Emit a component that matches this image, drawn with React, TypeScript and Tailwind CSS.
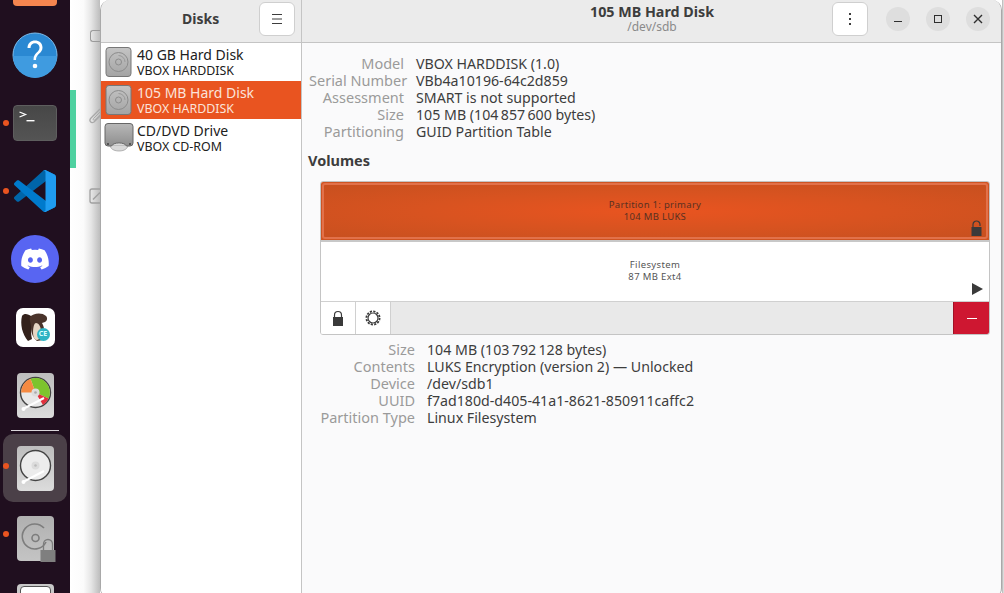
import React from "react";
import { FaDiscord } from "react-icons/fa";

function DiskIcon() {
  return (
    <svg width="28" height="30" viewBox="0 0 28 30" className="shrink-0">
      <defs>
        <linearGradient id="dk" x1="0" y1="0" x2="0" y2="1">
          <stop offset="0" stopColor="#c4c4c4" />
          <stop offset="1" stopColor="#a4a4a4" />
        </linearGradient>
      </defs>
      <rect x="1" y="0.5" width="25" height="29" rx="3" fill="url(#dk)" stroke="#777" />
      <circle cx="13.5" cy="15" r="9.5" fill="none" stroke="#8c8c8c" strokeWidth="1" />
      <circle cx="13.5" cy="15" r="3" fill="none" stroke="#8c8c8c" strokeWidth="1" />
      <path d="M13.5 8.5a6.5 6.5 0 0 1 6.5 6.5" fill="none" stroke="#999" strokeWidth="1" />
    </svg>
  );
}

function DriveIcon() {
  return (
    <svg width="30" height="30" viewBox="0 0 30 30" className="shrink-0">
      <defs>
        <linearGradient id="dr" x1="0" y1="0" x2="0" y2="1">
          <stop offset="0" stopColor="#b8b8b8" />
          <stop offset="1" stopColor="#8e8e8e" />
        </linearGradient>
      </defs>
      <path d="M15 28c-6 0-9-3-9-6h18c0 3-3 6-9 6z" fill="#d9d9d9" stroke="#888" strokeWidth="0.6" />
      <path d="M4 .5h22a3 3 0 0 1 3 3V20a3 3 0 0 1-3 3h-3.500c-1-2-3.500-3-7.500-3s-6.500 1-7.500 3H4a3 3 0 0 1-3-3V3.500a3 3 0 0 1 3-3z" fill="url(#dr)" stroke="#666" />
      <rect x="3" y="20" width="2" height="2" fill="#555" />
      <rect x="25" y="20" width="2" height="2" fill="#555" />
    </svg>
  );
}

function SidebarRow({ title, sub, active, icon }: { title: string; sub: string; active?: boolean; icon: React.ReactNode }) {
  return (
    <div className={`flex h-[38px] items-center gap-[4px] pl-[3px] ${active ? "bg-[#e95420] text-[#fbe3da]" : "text-[#202020]"}`}>
      <div className="flex w-[29px] justify-center">{icon}</div>
      <div className="flex flex-col pb-[1px]">
        <span className="text-[14px] leading-[17px] whitespace-nowrap">{title}</span>
        <span className="text-[12.400px] leading-[15px] whitespace-nowrap">{sub}</span>
      </div>
    </div>
  );
}

function Props({ rows, leading }: { rows: [string, string][]; leading: string }) {
  return (
    <div className={`grid grid-cols-[95px_1fr] gap-x-[12px] ${leading}`}>
      {rows.map(([k, v]) => (
        <React.Fragment key={k}>
          <span className="text-right text-[14.500px] text-[#9a9a9a] whitespace-nowrap">{k}</span>
          <span className="text-[14.200px] text-[#3d3d3d] whitespace-nowrap">{v}</span>
        </React.Fragment>
      ))}
    </div>
  );
}

function WinBtn({ children }: { children: React.ReactNode }) {
  return <div className="flex h-[24px] w-[24px] items-center justify-center rounded-full bg-[#dedede]">{children}</div>;
}

function DockDot({ y }: { y: string }) {
  return <span className={`absolute left-[3px] h-[6px] w-[6px] rounded-full bg-[#e95420] ${y}`} />;
}

function HelpIcon() {
  return (
    <svg width="46" height="46" viewBox="0 0 46 46">
      <circle cx="23" cy="23" r="22" fill="#2a88d2" stroke="#7cbcec" strokeWidth="1" />
      <path d="M1 24h44a22 22 0 0 1-44 0z" fill="#3f9be0" />
      <path d="M15.500 16c0-5 3.500-7.500 7.500-7.500s7.500 2.500 7.500 7c0 6-6.500 6-6.500 12.500h-2.500c0-7.500 6-7.500 6-12.500 0-2.500-2-4.300-4.500-4.300s-4.500 1.800-4.500 4.800z" fill="#fff" />
      <circle cx="23" cy="34" r="2.300" fill="#fff" />
    </svg>
  );
}

function TerminalIcon() {
  return (
    <div className="flex h-[36px] w-[44px] items-start rounded-[4px] border border-[#5e5e5e] bg-[linear-gradient(#474747,#545454)] pl-[5px] pt-[2px]">
      <svg width="18" height="16" viewBox="0 0 18 16">
        <path d="M0.500 4l6 2.500-6 2.500" fill="none" stroke="#fff" strokeWidth="1.300" />
        <rect x="7.500" y="12" width="8" height="1.400" fill="#fff" />
      </svg>
    </div>
  );
}

function VSCodeIcon() {
  return (
    <svg width="42" height="42" viewBox="0 0 100 100">
      <path d="M96.4614 10.7962L75.8569 0.875542C73.4719 -0.272773 70.6217 0.211611 68.75 2.08333L1.29858 63.5832C-0.515693 65.2373 -0.513607 68.0937 1.30308 69.7452L6.81272 74.754C8.29793 76.1042 10.5347 76.2036 12.1338 74.9905L93.3609 13.3699C96.086 11.3026 100 13.2462 100 16.6667V16.4275C100 14.0265 98.6246 11.8378 96.4614 10.7962Z" fill="#0065A9" />
      <path d="M96.4614 89.2038L75.8569 99.1245C73.4719 100.273 70.6217 99.7884 68.75 97.9167L1.29858 36.4169C-0.515693 34.7627 -0.513607 31.9063 1.30308 30.2548L6.81272 25.246C8.29793 23.8958 10.5347 23.7964 12.1338 25.0095L93.3609 86.6301C96.086 88.6974 100 86.7538 100 83.3334V83.5726C100 85.9735 98.6246 88.1622 96.4614 89.2038Z" fill="#007ACC" />
      <path d="M75.8578 99.1263C73.4721 100.274 70.6219 99.7885 68.75 97.9166C71.0564 100.223 75 98.5895 75 95.3278V4.67213C75 1.41039 71.0564 -0.223106 68.75 2.08329C70.6219 0.211402 73.4721 -0.273666 75.8578 0.873633L96.4587 10.7807C98.6234 11.8217 100 14.0112 100 16.4132V83.5871C100 85.9891 98.6234 88.1786 96.4586 89.2196L75.8578 99.1263Z" fill="#1F9CF0" />
    </svg>
  );
}

function BeaverIcon() {
  return (
    <div className="relative flex h-[39px] w-[39px] rounded-[7px] bg-white">
      <svg width="39" height="39" viewBox="0 0 39 39">
        <path d="M6 8c-2 8 0 18 6 25l4-2c-2-8 0-15 2-20-3-4-9-7-12-3z" fill="#33211b" />
        <path d="M14 9c3-4 12-5 16-1 2 2 1 5-1 6l-3 1c3 5 3 12 1 17l-6 1c-4-3-6-8-6-14 0-4-2-7-1-10z" fill="#4a342b" />
        <path d="M20 15c3 0 5 4 5 9s-2 8-4 8c-3 0-4-4-4-8s1-9 3-9z" fill="#e6d6c4" />
      </svg>
      <span className="absolute bottom-[6px] right-[5px] flex h-[13px] w-[13px] items-center justify-center rounded-full bg-[#2db4c4] text-[7px] font-bold text-[#dff]">CE</span>
    </div>
  );
}

function DiskBase({ children, bg = "bg-[linear-gradient(#bdbdbd,#dcdcdc)]" }: { children: React.ReactNode; bg?: string }) {
  return <div className={`flex h-[45px] w-[37px] items-center justify-center overflow-hidden rounded-[4px] ${bg}`}>{children}</div>;
}

function UsageIcon() {
  return (
    <DiskBase>
      <svg width="37" height="45" viewBox="0 0 37 45">
        <circle cx="18.500" cy="19.500" r="15" fill="#e8e8e8" stroke="#444" strokeWidth="1.400" />
        <path d="M18.500 19.500L13.500 5.800A14.500 14.500 0 0 1 31.600 25.600z" fill="#7dc42d" />
        <path d="M18.500 19.500L4 19.500A14.500 14.500 0 0 1 13.500 5.800z" fill="#f58a42" />
        <path d="M18.500 19.500L31.600 25.600A14.500 14.500 0 0 1 26 32z" fill="#e0303c" />
        <circle cx="18.500" cy="19.500" r="4" fill="#ddd" />
        <circle cx="18.500" cy="19.500" r="1.300" fill="#aaa" />
        <path d="M6 36l21-11" stroke="#fff" strokeWidth="2" />
        <circle cx="6.500" cy="36" r="2" fill="#fff" />
      </svg>
    </DiskBase>
  );
}

function DisksIcon() {
  return (
    <DiskBase>
      <svg width="37" height="45" viewBox="0 0 37 45">
        <circle cx="18.500" cy="19.500" r="15" fill="#ececec" stroke="#444" strokeWidth="1.400" />
        <circle cx="18.500" cy="19.500" r="4" fill="#dcdcdc" />
        <circle cx="18.500" cy="19.500" r="1.300" fill="#bbb" />
        <path d="M6 36l21-11" stroke="#fff" strokeWidth="2" />
        <circle cx="6.500" cy="36" r="2" fill="#fff" />
      </svg>
    </DiskBase>
  );
}

function LockedDiscIcon() {
  return (
    <div className="relative">
      <DiskBase bg="bg-[linear-gradient(#b0b0b0,#c4c4c4)]">
        <svg width="37" height="45" viewBox="0 0 37 45">
          <path d="M27 12a12.500 12.500 0 1 0 2 14" fill="none" stroke="#7d7d7d" strokeWidth="1.600" />
          <circle cx="18.500" cy="22" r="3.500" fill="none" stroke="#7d7d7d" strokeWidth="1.600" />
        </svg>
      </DiskBase>
      <svg width="16" height="24" viewBox="0 0 16 24" className="absolute bottom-[-1px] right-[-2px]">
        <path d="M3.500 13V6a4.500 4.500 0 0 1 9 0v7" fill="none" stroke="#7d7d7d" strokeWidth="1.300" />
        <rect x="0.500" y="12" width="15" height="12" fill="#7f7f7f" />
      </svg>
    </div>
  );
}

function DriveDockIcon() {
  return (
    <div className="h-[45px] w-[37px] rounded-[4px] bg-[#c8c8c8] px-[3px] pt-[2px]">
      <div className="h-[9px] rounded-t-[4px] border border-[#555] bg-white" />
    </div>
  );
}

function Slot({ children, className = "" }: { children: React.ReactNode; className?: string }) {
  return <div className={`flex h-[68px] shrink-0 items-center justify-center ${className}`}>{children}</div>;
}

function Dock() {
  return (
    <div className="relative flex w-[70px] shrink-0 flex-col bg-[#200f1f]">
      <Slot className="-mt-[47px]">
        <div className="h-[37px] w-[44px] rounded-b-[4px] bg-[#f5854f]" />
      </Slot>
      <Slot><HelpIcon /></Slot>
      <Slot><TerminalIcon /></Slot>
      <Slot><VSCodeIcon /></Slot>
      <Slot><div className="flex h-[48px] w-[48px] items-center justify-center rounded-full bg-[#5865f2] text-white"><FaDiscord size={30} /></div></Slot>
      <Slot><BeaverIcon /></Slot>
      <Slot><UsageIcon /></Slot>
      <div className="mx-[11px] mt-[1px] h-px shrink-0 bg-[#d8d4d8]" />
      <Slot className="mx-[3px] mt-[3px] h-[64px] rounded-[10px] bg-[#4b4048]"><DisksIcon /></Slot>
      <Slot className="mt-[2px]"><LockedDiscIcon /></Slot>
      <Slot><DriveDockIcon /></Slot>
      <DockDot y="top-[120px]" />
      <DockDot y="top-[188px]" />
      <DockDot y="top-[463px]" />
      <DockDot y="top-[531px]" />
    </div>
  );
}

function BackStrip() {
  return (
    <div className="flex w-[30px] shrink-0 flex-col bg-[linear-gradient(90deg,#fff_0%,#fbfbfb_45%,#e6e6e6_70%,#bdbdbd_100%)]">
      <div className="flex h-[90px] items-start justify-end pt-[30px]">
        <div className="h-[12px] w-[10px] rounded-l-[3px] border border-r-0 border-[#9a9a9a]" />
      </div>
      <div className="flex h-[78px] items-start justify-between pt-[17px]">
        <div className="-mt-[17px] h-[78px] w-[6px] bg-[#4fd1a0]" />
        <svg width="12" height="18" viewBox="0 0 12 18">
          <path d="M12 2L3 11c-2.500 2.500 0 6 3 4l6-6" fill="none" stroke="#a8a8a8" strokeWidth="1.300" />
          <path d="M12 5L5.500 11.500c-1 1 .5 2.300 1.500 1.300L12 8" fill="none" stroke="#a8a8a8" strokeWidth="1" />
        </svg>
      </div>
      <div className="flex items-start justify-end pt-[20px]">
        <svg width="11" height="16" viewBox="0 0 11 16">
          <path d="M11 1H3a2 2 0 0 0-2 2v10a2 2 0 0 0 2 2h8" fill="none" stroke="#a0a0a0" strokeWidth="1.300" />
          <path d="M4 11.500l7-7" stroke="#a0a0a0" strokeWidth="1.500" />
        </svg>
      </div>
    </div>
  );
}

function SmallLock({ open }: { open?: boolean }) {
  return (
    <svg width="12" height="16" viewBox="0 0 12 16">
      <path d={open ? "M2 9V4.500a3.500 3.500 0 0 1 7 0V6" : "M2.500 8V5a3.500 3.500 0 0 1 7 0v3"} fill="none" stroke="#3a3a3a" strokeWidth="1.200" />
      <rect x={open ? "0.500" : "1"} y="7" width="10" height="9" fill="#3a3a3a" />
    </svg>
  );
}

function Volume() {
  return (
    <div className="ml-[18px] mr-[11px] mt-[12px] overflow-hidden rounded-[3px] border border-[#c4c4c4] bg-white">
      <div className="flex h-[60px] border-b-2 border-[#c8c8c8] bg-[#cf5422] p-[1px]">
        <div className="relative flex flex-1 flex-col items-center justify-center rounded-[3px] border-2 border-[#e2714a] bg-[radial-gradient(ellipse_at_center,#e95420_0%,#d85320_50%,#c8501f_100%)] pb-[1px] text-[9.500px] leading-[12px] tracking-[0.3px] text-[#5a3020]">
          <span>Partition 1: primary</span>
          <span>104 MB LUKS</span>
          <span className="absolute bottom-[1px] right-[3px] flex"><SmallLock open /></span>
        </div>
      </div>
      <div className="relative flex h-[60px] flex-col items-center justify-center border-b border-[#d0d0d0] pb-[2px] text-[9.500px] leading-[12px] tracking-[0.35px] text-[#555]">
        <span>Filesystem</span>
        <span>87 MB Ext4</span>
        <svg width="11" height="12" viewBox="0 0 11 12" className="absolute bottom-[6px] right-[6px]">
          <path d="M0 0l11 6-11 6z" fill="#3a3a3a" />
        </svg>
      </div>
      <div className="flex h-[32px] bg-[#e9e9e9]">
        <div className="flex w-[35px] items-center justify-center border-r border-[#d0d0d0] bg-white"><SmallLock /></div>
        <div className="flex w-[35px] items-center justify-center border-r border-[#d0d0d0] bg-white">
          <svg width="16" height="16" viewBox="0 0 16 16">
            <circle cx="8" cy="8" r="5" fill="none" stroke="#3a3a3a" strokeWidth="1.200" />
            <circle cx="8" cy="8" r="6.600" fill="none" stroke="#3a3a3a" strokeWidth="1.800" strokeDasharray="2.200 1.260" />
          </svg>
        </div>
        <div className="flex-1" />
        <div className="flex w-[36px] items-center justify-center border-l border-[#a01226] bg-[#ce1731]">
          <div className="h-px w-[10px] bg-white" />
        </div>
      </div>
    </div>
  );
}

export default function App() {
  return (
    <div className="flex h-[593px] w-[1004px] overflow-hidden bg-white [font-family:'Noto_Sans',sans-serif]">
      <Dock />
      <BackStrip />
      <div className="flex h-[598px] w-[902px] shrink-0 flex-col overflow-hidden rounded-[10px] border-x border-[#a9a9a9] bg-[#fafafb]">
        <div className="flex h-[43px] shrink-0 border-b border-[#c4c4c4] bg-[#ebebeb]">
          <div className="flex w-[201px] shrink-0 items-center justify-between border-r border-[#c4c4c4] pb-[5px] pl-[81px] pr-[6px]">
            <span className="text-[14px] font-bold text-[#3d3d3d]">Disks</span>
            <div className="flex h-[34px] w-[36px] items-center justify-center rounded-[6px] border border-[#cfcfcf] bg-white">
              <svg width="12" height="10" viewBox="0 0 12 10"><path d="M1 .5h10M1 5h10M1 9.500h10" stroke="#3d3d3d" strokeWidth="1" /></svg>
            </div>
          </div>
          <div className="flex flex-1 items-center pb-[5px] pl-[290px] pr-[11px]">
            <div className="flex w-[120px] flex-col items-center -mt-[1px]">
              <span className="whitespace-nowrap text-[14.300px] font-bold leading-[17px] text-[#3d3d3d]">105 MB Hard Disk</span>
              <span className="whitespace-nowrap text-[12px] leading-[14px] text-[#8a8a8a]">/dev/sdb</span>
            </div>
            <div className="ml-[120px] flex h-[34px] w-[36px] items-center justify-center rounded-[6px] border border-[#cfcfcf] bg-white">
              <svg width="4" height="12" viewBox="0 0 4 12"><path d="M2 0v2M2 5v2M2 10v2" stroke="#3d3d3d" strokeWidth="2" /></svg>
            </div>
            <div className="ml-auto flex gap-[16px]">
              <WinBtn><div className="mt-[6px] h-px w-[8px] bg-[#2e2e2e]" /></WinBtn>
              <WinBtn><div className="h-[8px] w-[8px] border border-[#2e2e2e]" /></WinBtn>
              <WinBtn>
                <svg width="10" height="10" viewBox="0 0 10 10"><path d="M1 1l8 8M9 1l-8 8" stroke="#2e2e2e" strokeWidth="1.400" /></svg>
              </WinBtn>
            </div>
          </div>
        </div>
        <div className="flex flex-1">
          <div className="w-[201px] shrink-0 border-r border-[#c4c4c4] bg-white">
            <SidebarRow title="40 GB Hard Disk" sub="VBOX HARDDISK" icon={<DiskIcon />} />
            <SidebarRow title="105 MB Hard Disk" sub="VBOX HARDDISK" active icon={<DiskIcon />} />
            <SidebarRow title="CD/DVD Drive" sub="VBOX CD-ROM" icon={<DriveIcon />} />
          </div>
          <div className="flex-1 pt-[12px]">
            <div className="pl-[7px]">
              <Props
                leading="leading-[17.100px]"
                rows={[
                  ["Model", "VBOX HARDDISK (1.0)"],
                  ["Serial Number", "VBb4a10196-64c2d859"],
                  ["Assessment", "SMART is not supported"],
                  ["Size", "105 MB (104\u2009857\u2009600 bytes)"],
                  ["Partitioning", "GUID Partition Table"],
                ]}
              />
            </div>
            <div className="mt-[10.750px] pl-[6px] text-[14.500px] font-bold leading-[18px] text-[#3d3d3d]">Volumes</div>
            <Volume />
            <div className="mt-[6px] pl-[18px]">
              <Props
                leading="leading-[17px]"
                rows={[
                  ["Size", "104 MB (103\u2009792\u2009128 bytes)"],
                  ["Contents", "LUKS Encryption (version 2) — Unlocked"],
                  ["Device", "/dev/sdb1"],
                  ["UUID", "f7ad180d-d405-41a1-8621-850911caffc2"],
                  ["Partition Type", "Linux Filesystem"],
                ]}
              />
            </div>
          </div>
        </div>
      </div>
      <div className="flex-1 bg-[linear-gradient(90deg,#b4b4b4,#e8e8e8)]" />
    </div>
  );
}
